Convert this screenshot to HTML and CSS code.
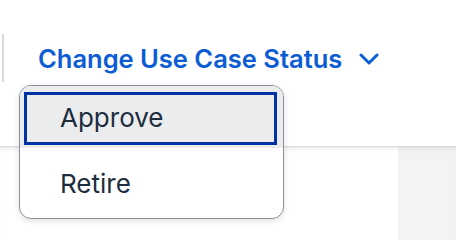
FILE: index.html
```html
<!DOCTYPE html>
<html>
<head>
<meta charset="utf-8">
<link rel="stylesheet" href="styles.css">
</head>
<body>
<div class="page">
  <header class="header">
    <div class="toolbar">
      <span class="sep"></span>
      <button class="menu-button">
        <span class="menu-label">Change Use Case Status</span>
        <svg class="chevron" width="20" height="12" viewBox="0 0 20 12"><path d="M2 2 L10 10 L18 2" fill="none" stroke="#0b5cd5" stroke-width="3" stroke-linecap="round" stroke-linejoin="round"/></svg>
      </button>
    </div>
  </header>
  <main class="content">
    <div class="main-panel"></div>
    <div class="side-panel"></div>
  </main>
  <ul class="menu">
    <li class="item focused">Approve</li>
    <li class="item">Retire</li>
  </ul>
</div>
</body>
</html>
```
FILE: styles.css
```css
html, body {
  margin: 0;
  padding: 0;
}
body {
  width: 456px;
  height: 240px;
  overflow: hidden;
  font-family: "Inter", "Liberation Sans", sans-serif;
  background: #ffffff;
}
.page {
  position: relative;
  width: 456px;
  height: 240px;
  display: flex;
  flex-direction: column;
}
.header {
  height: 147px;
  background: #ffffff;
  border-bottom: 1px solid #d5d8dc;
  box-sizing: border-box;
  padding-top: 34px;
}
.toolbar {
  display: flex;
  align-items: center;
  height: 48px;
  padding-left: 2px;
}
.sep {
  width: 2px;
  height: 48px;
  background: #d9d9d9;
}
.menu-button {
  display: flex;
  align-items: center;
  gap: 17px;
  margin-left: 34px;
  padding: 0;
  border: 0;
  background: none;
  font-family: inherit;
  cursor: pointer;
}
.menu-label {
  font-size: 25.5px;
  font-weight: 600;
  color: #0b5cd5;
  letter-spacing: 0;
}
.chevron {
  display: block;
  margin-top: 2px;
}
.content {
  flex: 1;
  display: flex;
  box-shadow: inset 0 4px 4px -2px rgba(0, 0, 0, 0.08);
}
.main-panel {
  width: 398px;
}
.side-panel {
  flex: 1;
  background: #f2f3f4;
  box-shadow: inset 0 4px 4px -2px rgba(0, 0, 0, 0.08);
}
.menu {
  position: absolute;
  left: 19px;
  top: 85px;
  width: 265px;
  height: 134px;
  box-sizing: border-box;
  margin: 0;
  padding: 0;
  list-style: none;
  background: #ffffff;
  border: 1px solid #8a939d;
  border-radius: 12px;
  overflow: hidden;
  box-shadow: 0 2px 6px rgba(0, 0, 0, 0.12);
}
.item {
  position: relative;
  height: 62px;
  display: flex;
  align-items: center;
  padding-left: 40px;
  font-size: 26px;
  color: #1d2d3e;
  box-sizing: border-box;
}
.item + .item {
  height: 70px;
}
.focused {
  background: #eaecee;
}
.focused::before {
  content: "";
  position: absolute;
  top: 6px;
  left: 4px;
  right: 6px;
  bottom: 3px;
  border: 3px solid #0032a5;
}
```
